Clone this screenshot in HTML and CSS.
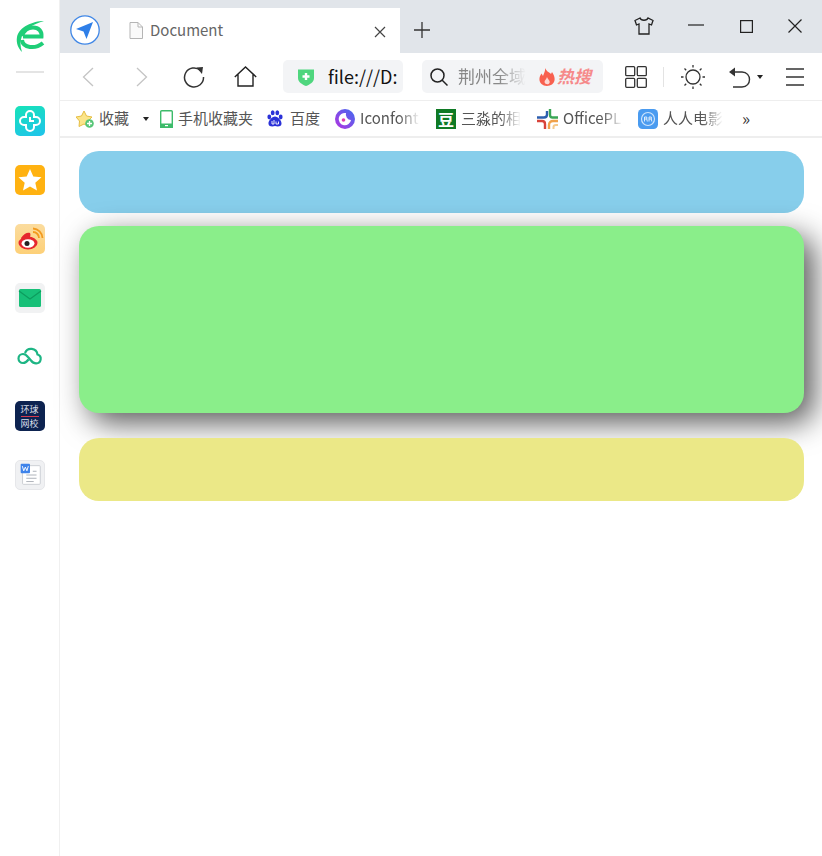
FILE: index.html
```html
<!DOCTYPE html>
<html>
<head>
    <title>Document</title>
    <link rel="stylesheet" href="styles.css">
</head>
<body>
    <div class="browser">
        <aside class="sidebar">
            <svg class="side-logo" viewBox="0 0 30 34">
                <path d="M7 17 C9 11 13 8.500 18 8.500 C24 8.500 27 12.500 26.500 17.500 L8 17.500" fill="none" stroke="#1fce78" stroke-width="4"/>
                <path d="M7 21 C8 29 20 30.500 28 24" fill="none" stroke="#1fce78" stroke-width="4"/>
                <path d="M29 2 C18 2 4 8 2 18 C1 24 3 29 7 33 C5 27 5 22 7 17 C10 10 18 5 29 2 Z" fill="#1fce78"/>
            </svg>
            <div class="side-line"></div>
            <div class="side-app app-teal">
                <svg viewBox="0 0 30 30"><path d="M11 11 V9 a4 4 0 0 1 8 0 V11 H21 a4 4 0 0 1 0 8 H19 V21 a4 4 0 0 1 -8 0 V19 H9 a4 4 0 0 1 0 -8 Z M15 11 V15 H19" fill="none" stroke="#fff" stroke-width="2"/></svg>
            </div>
            <div class="side-app app-star">
                <svg viewBox="0 0 30 30"><path d="M15 4 L18.300 11.500 L26.500 12.300 L20.300 17.700 L22 25.500 L15 21.500 L8 25.500 L9.700 17.700 L3.500 12.300 L11.700 11.500 Z" fill="#fff"/></svg>
            </div>
            <div class="side-app app-weibo">
                <svg viewBox="0 0 30 30">
                    <ellipse cx="13" cy="19" rx="9.500" ry="6.500" fill="#e6262e"/>
                    <path d="M6 14 C9 9 13 8 15 9 C16 11 15 12 15 13 L8 18 Z" fill="#e6262e"/>
                    <ellipse cx="13" cy="19.500" rx="6.500" ry="4.200" fill="#fff"/>
                    <circle cx="12" cy="19.500" r="2.500" fill="#222"/>
                    <path d="M18 8 a6 6 0 0 1 6 6 M18 4.500 a10 10 0 0 1 9.500 9.500" fill="none" stroke="#f39a1e" stroke-width="1.800"/>
                </svg>
            </div>
            <div class="side-app app-mail">
                <svg viewBox="0 0 30 30"><rect x="4" y="6" width="22" height="18" rx="1.500" fill="#17c078"/><path d="M4 8 L15 16 L26 8" fill="none" stroke="#0d9c5e" stroke-width="1.200"/></svg>
            </div>
            <div class="side-app">
                <svg viewBox="0 0 30 30"><path d="M8 21 a4.500 4.500 0 0 1 0 -9 c2 0 3.500 1 5 3 l3 3.500 c1.500 2 3 2.800 5 2.800 a4.500 4.500 0 0 0 1.500 -8.800 a6.500 6.500 0 0 0 -12.500 -1.500 M8 21 c2.500 0 4 -1.500 5.500 -3.500" fill="none" stroke="#1db584" stroke-width="2.200"/></svg>
            </div>
            <div class="side-app app-dark">
                <span class="dark-row">环球</span>
                <span class="dark-bar"></span>
                <span class="dark-row">网校</span>
            </div>
            <div class="side-app app-word">
                <svg viewBox="0 0 30 30">
                    <rect x="7" y="5" width="19" height="20" rx="1" fill="#fff" stroke="#c9ccd2"/>
                    <path d="M11 15 H22 M11 18.500 H22 M11 22 H19 M18 11 H22" stroke="#a9aeb6" stroke-width="1"/>
                    <rect x="5" y="3" width="10" height="10" rx="1" fill="#3e83ea"/>
                    <path d="M6.800 5.500 L8.300 10.500 L10 6.500 L11.700 10.500 L13.200 5.500" fill="none" stroke="#fff" stroke-width="1"/>
                </svg>
            </div>
        </aside>

        <div class="window">
            <div class="titlebar">
                <svg class="nav-logo" viewBox="0 0 30 30">
                    <circle cx="15" cy="15" r="14.200" fill="#fff" stroke="#3f86e6" stroke-width="1.300"/>
                    <path d="M23 7 L6 14 L13.500 16.500 L16.500 24 Z" fill="#2f7fe8"/>
                </svg>
                <div class="tab">
                    <svg class="tab-doc" viewBox="0 0 14 17"><path d="M1 .5 H9 L13.500 5 V16.500 H1 Z M9 .5 V5 H13.500" fill="#fafafa" stroke="#b5b5b5"/></svg>
                    <span class="tab-title">Document</span>
                    <svg class="tab-close" viewBox="0 0 12 12"><path d="M1 1 L11 11 M11 1 L1 11" stroke="#444" stroke-width="1.200"/></svg>
                </div>
                <svg class="tab-new" viewBox="0 0 16 16"><path d="M8 0 V16 M0 8 H16" stroke="#333" stroke-width="1.300"/></svg>
                <svg class="win-shirt" viewBox="0 0 20 18"><path d="M6 1 L1 3.500 L2.500 8 L5 7 V17 H15 V7 L17.500 8 L19 3.500 L14 1 C13 4 7 4 6 1 Z" fill="none" stroke="#222" stroke-width="1.300"/></svg>
                <svg class="win-min" viewBox="0 0 16 2"><path d="M0 1 H16" stroke="#222" stroke-width="1.200"/></svg>
                <svg class="win-max" viewBox="0 0 13 13"><rect x=".6" y=".6" width="11.800" height="11.800" fill="none" stroke="#222" stroke-width="1.200"/></svg>
                <svg class="win-close" viewBox="0 0 14 14"><path d="M.5 .5 L13.500 13.500 M13.500 .5 L.5 13.500" stroke="#222" stroke-width="1.200"/></svg>
            </div>

            <div class="toolbar">
                <svg class="tb-back" viewBox="0 0 12 20"><path d="M11 1 L1.500 10 L11 19" fill="none" stroke="#c4c4c4" stroke-width="1.300"/></svg>
                <svg class="tb-forward" viewBox="0 0 12 20"><path d="M1 1 L10.500 10 L1 19" fill="none" stroke="#c4c4c4" stroke-width="1.300"/></svg>
                <svg class="tb-reload" viewBox="0 0 22 22"><path d="M17.500 4.500 A9.500 9.500 0 1 0 20.500 11" fill="none" stroke="#333" stroke-width="1.500"/><path d="M13.500 1.500 L20 1 L19 8 Z" fill="#333"/></svg>
                <svg class="tb-home" viewBox="0 0 23 21"><path d="M.8 11 L11.500 1 L22.200 11 M4 8.500 V20 H19 V8.500" fill="none" stroke="#222" stroke-width="1.400"/></svg>
                <div class="address">
                    <svg class="shield" viewBox="0 0 16 18"><path d="M0 1.500 H16 V10 C16 14 12 16.500 8 18 C4 16.500 0 14 0 10 Z" fill="#4fd67e"/><path d="M8 5 V12 M4.500 8.500 H11.500" stroke="#fff" stroke-width="2.400"/></svg>
                    <span class="address-text">file:///D:</span>
                </div>
                <div class="search">
                    <svg class="search-icon" viewBox="0 0 18 18"><circle cx="7.500" cy="7.500" r="6.500" fill="none" stroke="#222" stroke-width="1.500"/><path d="M12 12 L17.500 17.500" stroke="#222" stroke-width="1.500"/></svg>
                    <span class="search-text">荆州全域</span>
                    <svg class="flame" viewBox="0 0 16 18"><path d="M6 0 C8 4 10 4 12 6 L13 4 C16 8 17 13 13 16.500 C10 18.500 5 18.500 2.500 16 C-.5 13 0 9 2.500 5.500 L4 8 C5 5 6.500 3 6 0 Z" fill="#f8604f"/><path d="M8 9 C9 12 11.500 12.500 10.500 15 C9.500 17 6 16.500 5.500 14 C5.500 12 7.500 11.500 8 9 Z" fill="#fff" opacity=".75"/></svg>
                    <span class="hot-text">热搜</span>
                </div>
                <svg class="tb-grid" viewBox="0 0 22 22"><g fill="none" stroke="#333" stroke-width="1.300"><rect x=".7" y=".7" width="9" height="9" rx="1"/><rect x="12.300" y=".7" width="9" height="9" rx="1"/><rect x=".7" y="12.300" width="9" height="9" rx="1"/><rect x="12.300" y="12.300" width="9" height="9" rx="1"/></g></svg>
                <div class="tb-sep"></div>
                <svg class="tb-sun" viewBox="0 0 24 24"><circle cx="12" cy="12" r="7" fill="none" stroke="#333" stroke-width="1.300"/><path d="M12 0 V2.500 M12 21.500 V24 M0 12 H2.500 M21.500 12 H24 M3.500 3.500 L5.200 5.200 M18.800 18.800 L20.500 20.500 M3.500 20.500 L5.200 18.800 M18.800 5.200 L20.500 3.500" stroke="#333" stroke-width="1.300"/></svg>
                <svg class="tb-undo" viewBox="0 0 22 22"><path d="M4 6 H13 C23 6 23 21 13 21 H4" fill="none" stroke="#333" stroke-width="1.400"/><path d="M0 6 L6 1.500 V10.500 Z" fill="#333"/></svg>
                <span class="caret tb-caret"></span>
                <svg class="tb-menu" viewBox="0 0 18 18"><path d="M0 1 H18 M0 9 H18 M0 17 H18" stroke="#333" stroke-width="1.300"/></svg>
            </div>

            <div class="bookmarks">
                <div class="bm bm-fav">
                    <svg class="bm-icon-star" viewBox="0 0 18 18"><path d="M8 1 L10.500 6 L16 7 L12 11 L13 16.500 L8 14 L3 16.500 L3.500 11 L0 7 L5.500 6 Z" fill="#fbe58a" stroke="#e6bd42"/><circle cx="13.500" cy="13.500" r="4.300" fill="#57c677"/><path d="M13.500 11 V16 M11 13.500 H16" stroke="#fff" stroke-width="1.300"/></svg>
                    <span>收藏</span>
                </div>
                <span class="caret bm-caret"></span>
                <div class="bm bm-phone">
                    <svg class="bm-icon-phone" viewBox="0 0 13 18"><rect x=".7" y=".7" width="11.600" height="16.600" rx="1" fill="#fff" stroke="#3dbb6a" stroke-width="1.400"/><rect x="0" y="13.500" width="13" height="4.500" fill="#3dbb6a"/><rect x="5" y="15" width="3" height="1.200" fill="#fff"/></svg>
                    <span>手机收藏夹</span>
                </div>
                <div class="bm bm-baidu">
                    <svg class="bm-icon-baidu" viewBox="0 0 16 17"><g fill="#2b32d8"><ellipse cx="2.300" cy="7" rx="1.900" ry="2.400"/><ellipse cx="5.700" cy="2.700" rx="1.900" ry="2.500"/><ellipse cx="10.300" cy="2.700" rx="1.900" ry="2.500"/><ellipse cx="13.700" cy="7" rx="1.900" ry="2.400"/><path d="M8 6.500 C11 6.500 15 11 14.500 14 C14 17 10 16.500 8 16 C6 16.500 2 17 1.500 14 C1 11 5 6.500 8 6.500 Z"/></g><path d="M5 11 V14 H7 V10 M9 11.500 V14 H11.500 V11.500" fill="none" stroke="#fff" stroke-width=".9"/></svg>
                    <span>百度</span>
                </div>
                <div class="bm bm-iconfont">
                    <svg class="bm-icon-ali" viewBox="0 0 20 20"><defs><linearGradient id="ali" x1="0" y1="1" x2="1" y2="0"><stop offset="0" stop-color="#b632e0"/><stop offset="1" stop-color="#3f6cf0"/></linearGradient></defs><circle cx="10" cy="10" r="10" fill="url(#ali)"/><path d="M11 4 A6.200 6.200 0 1 0 16 11 A5.500 5.500 0 0 1 11 4 Z" fill="#fff"/><circle cx="8.500" cy="11" r="1.800" fill="#e23cb0"/></svg>
                    <span class="fade">Iconfont</span>
                </div>
                <div class="bm bm-douban">
                    <div class="douban-logo">豆</div>
                    <span class="fade">三淼的相</span>
                </div>
                <div class="bm bm-office">
                    <svg class="bm-icon-office" viewBox="0 0 21 20"><path d="M0 8.500 H7 C9 8.500 10 7.500 10 5.500 V2" fill="none" stroke="#2c5fae" stroke-width="2.400"/><path d="M13 0 V6 C13 7.500 14 8.500 15.500 8.500 H21" fill="none" stroke="#3aa655" stroke-width="2.400"/><path d="M0 12 H5 C7 12 8 13 8 15 V20" fill="none" stroke="#d8433a" stroke-width="2.400"/><path d="M12 20 V16 C12 13 14 12 16 12 H21" fill="none" stroke="#f0a14a" stroke-width="2.400"/><path d="M16.500 20 V18 C16.500 16.800 17.500 16 19 16 H21" fill="none" stroke="#f5c98c" stroke-width="2"/></svg>
                    <span class="fade">OfficePL</span>
                </div>
                <div class="bm bm-rr">
                    <svg class="bm-icon-rr" viewBox="0 0 20 20"><rect width="20" height="20" rx="4.500" fill="#4a9bf0"/><circle cx="10" cy="10" r="6.500" fill="none" stroke="#cfe5fd" stroke-width="1.200"/><path d="M6.500 12.500 V8 H8.800 V10 H6.500 M8.800 10 L9.300 12.500 M11 12.500 V8 H13.300 V10 H11 M13.300 10 L13.800 12.500" fill="none" stroke="#fff" stroke-width=".8"/></svg>
                    <span class="fade">人人电影</span>
                </div>
                <span class="bm-more">»</span>
            </div>

            <div class="content">
                <div class="box box-blue"></div>
                <div class="box box-green"></div>
                <div class="box box-yellow"></div>
            </div>
        </div>
    </div>
</body>
</html>
```

FILE: styles.css
```css
:root {
    --title-bg: #e1e5ea;
    --field-bg: #f3f4f6;
    --line: #eeeeee;
    --text: #555;
}

html, body {
    margin: 0;
    height: 100%;
    overflow: hidden;
    background: #fff;
}

body {
    font-family: "Noto Sans CJK SC", "Open Sans", sans-serif;
    color: var(--text);
}

svg {
    display: block;
    flex: none;
}

.browser {
    display: flex;
    width: 822px;
    height: 856px;
}

/* left app rail */
.sidebar {
    width: 59px;
    flex: none;
    border-right: 1px solid #f0f0f0;
    display: flex;
    flex-direction: column;
    align-items: center;
}

.side-logo {
    width: 30px;
    height: 34px;
    margin-top: 19px;
}

.side-line {
    width: 28px;
    height: 2px;
    background: #e4e4e4;
    margin: 18px 0 33px;
}

.side-app {
    width: 30px;
    height: 30px;
    margin-bottom: 29px;
    border-radius: 5px;
    overflow: hidden;
    flex: none;
}

.app-teal { background: linear-gradient(160deg, #17e3b8, #1fc3ec); }
.app-star { background: #ffb211; }
.app-weibo { background: linear-gradient(#fbdc9e, #fdd078); }
.app-mail { background: #f1f2f3; }
.app-word { background: #f0f1f3; border: 1px solid #e6e7ea; box-sizing: border-box; }

.app-dark {
    background: #0d2350;
    color: #d9deea;
    font-size: 9px;
    display: flex;
    flex-direction: column;
    align-items: center;
    justify-content: center;
}

.dark-row {
    display: block;
    height: 13px;
    line-height: 13px;
}

.dark-bar {
    width: 18px;
    height: 1px;
    background: #d33a4e;
}

.window {
    flex: 1;
    min-width: 0;
    display: flex;
    flex-direction: column;
}

/* tab strip */
.titlebar {
    height: 53px;
    flex: none;
    background: var(--title-bg);
    display: flex;
    align-items: center;
}

.nav-logo {
    width: 30px;
    height: 30px;
    margin: 15px 0 0 10px;
    align-self: flex-start;
}

.tab {
    width: 290px;
    height: 45px;
    margin: 8px 0 0 10px;
    background: #fff;
    display: flex;
    align-items: center;
}

.tab-doc {
    width: 14px;
    height: 17px;
    margin-left: 19px;
}

.tab-title {
    font-size: 15px;
    color: #666;
    margin: -2px 0 0 7px;
    width: 75px;
    white-space: nowrap;
}

.tab-close {
    width: 12px;
    height: 12px;
    margin-left: 149px;
    margin-top: 3px;
}

.tab-new {
    width: 16px;
    height: 16px;
    margin: 6px 0 0 14px;
}

.win-shirt {
    width: 20px;
    height: 18px;
    margin: 0 0 2px 204px;
}

.win-min {
    width: 16px;
    height: 2px;
    margin: 0 0 3px 34px;
}

.win-max {
    width: 13px;
    height: 13px;
    margin: 0 0 1px 36px;
}

.win-close {
    width: 14px;
    height: 14px;
    margin: 0 0 1px 35px;
}

/* address bar row */
.toolbar {
    height: 47px;
    flex: none;
    border-bottom: 1px solid var(--line);
    display: flex;
    align-items: center;
}

.tb-back { width: 12px; height: 20px; margin-left: 22px; }
.tb-forward { width: 12px; height: 20px; margin-left: 42px; }
.tb-reload { width: 22px; height: 22px; margin-left: 35px; }
.tb-home { width: 23px; height: 21px; margin-left: 29px; }

.address {
    width: 120px;
    height: 33px;
    margin-left: 26px;
    background: var(--field-bg);
    border-radius: 5px;
    display: flex;
    align-items: center;
}

.shield {
    width: 16px;
    height: 18px;
    margin-left: 15px;
}

.address-text {
    font-size: 18px;
    line-height: 24px;
    color: #111;
    margin: -2px 0 0 14px;
    white-space: nowrap;
}

.search {
    width: 181px;
    height: 33px;
    margin-left: 19px;
    background: var(--field-bg);
    border-radius: 5px;
    display: flex;
    align-items: center;
}

.search-icon {
    width: 18px;
    height: 18px;
    margin-left: 8px;
}

.search-text {
    width: 68px;
    font-size: 17px;
    line-height: 24px;
    color: #888;
    margin: -2px 0 0 10px;
    white-space: nowrap;
    -webkit-mask-image: linear-gradient(90deg, #000 60%, transparent);
    mask-image: linear-gradient(90deg, #000 60%, transparent);
}

.flame {
    width: 16px;
    height: 18px;
    margin-left: 13px;
}

.hot-text {
    font-size: 17px;
    line-height: 24px;
    font-weight: 700;
    font-style: italic;
    color: #f68a8a;
    margin: -2px 0 0 2px;
}

.tb-grid { width: 22px; height: 22px; margin-left: 22px; }

.tb-sep {
    width: 1px;
    height: 20px;
    background: #e3e3e3;
    margin-left: 16px;
}

.tb-sun { width: 24px; height: 24px; margin-left: 17px; }
.tb-undo { width: 22px; height: 22px; margin-left: 24px; }

.caret {
    width: 0;
    height: 0;
    border-left: 3.500px solid transparent;
    border-right: 3.500px solid transparent;
    border-top: 4px solid #222;
    flex: none;
}

.tb-caret { margin-left: 6px; }
.tb-menu { width: 18px; height: 18px; margin-left: 23px; }

/* bookmarks row */
.bookmarks {
    height: 35px;
    flex: none;
    border-bottom: 2px solid var(--line);
    display: flex;
    align-items: center;
    font-size: 15px;
    color: #555;
}

.bm {
    display: flex;
    align-items: center;
    white-space: nowrap;
}

.bm span {
    margin-top: -2px;
}

.bm-fav { margin-left: 16px; gap: 5px; }
.bm-icon-star { width: 18px; height: 18px; }
.bm-caret { margin-left: 14px; }
.bm-phone { margin-left: 11px; gap: 5px; }
.bm-icon-phone { width: 13px; height: 18px; }
.bm-baidu { margin-left: 14px; gap: 7px; }
.bm-icon-baidu { width: 16px; height: 17px; }
.bm-iconfont { margin-left: 15px; gap: 5px; }
.bm-icon-ali { width: 20px; height: 20px; }
.bm-douban { margin-left: 16px; gap: 5px; }
.bm-office { margin-left: 16px; gap: 5px; }
.bm-icon-office { width: 21px; height: 20px; }
.bm-rr { margin-left: 15px; gap: 5px; }
.bm-icon-rr { width: 20px; height: 20px; }

.douban-logo {
    width: 20px;
    height: 20px;
    background: #0f7a25;
    color: #fff;
    font-size: 16px;
    font-weight: 700;
    line-height: 20px;
    text-align: center;
    flex: none;
}

.fade {
    display: block;
    width: 60px;
    -webkit-mask-image: linear-gradient(90deg, #000 65%, transparent);
    mask-image: linear-gradient(90deg, #000 65%, transparent);
}

.bm-more {
    margin: -3px 0 0 19px;
    font-size: 17px;
    color: #333;
}

/* page area */
.content {
    flex: 1;
    padding: 13px 18px 0 19px;
}

.box {
    border-radius: 20px;
}

.box-blue {
    height: 62px;
    background: #87ceeb;
}

.box-green {
    height: 187px;
    margin-top: 13px;
    background: #8aee8a;
    box-shadow: 10px 10px 30px rgba(0, 0, 0, 0.65);
}

.box-yellow {
    position: relative;
    height: 63px;
    margin-top: 25px;
    background: #ebe887;
}
```
